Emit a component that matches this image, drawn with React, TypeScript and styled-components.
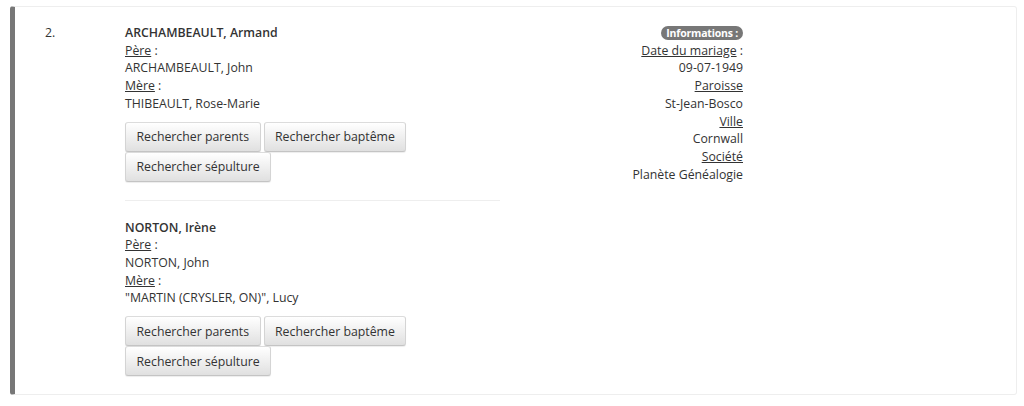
import React from "react";
import styled, { createGlobalStyle } from "styled-components";

const GlobalStyle = createGlobalStyle`
  html, body { margin: 0; padding: 0; background: #ffffff; }
  body {
    font-family: "Open Sans", "Liberation Sans", sans-serif;
    font-size: 12.3px;
    line-height: 17.7px;
    color: #333333;
  }
`;

const Card = styled.div`
  box-sizing: border-box;
  margin: 6px 0 0 10px;
  width: 1007px;
  height: 389px;
  border: 1px solid #eeeeee;
  border-left: 5px solid #777777;
  border-radius: 3px;
  padding: 17px 0 0 30px;
  display: grid;
  grid-template-columns: 80px 375px 243px;
  align-items: start;
`;

const Num = styled.div``;

const People = styled.div`
  display: flex;
  flex-direction: column;
`;

const Person = styled.div`
  display: flex;
  flex-direction: column;
`;

const Name = styled.div`
  font-weight: 600;
`;

const Label = styled.span`
  text-decoration: underline;
`;

const Buttons = styled.div`
  display: flex;
  flex-wrap: wrap;
  column-gap: 3px;
  row-gap: 0;
  margin-top: 9px;
  max-width: 300px;
`;

const Button = styled.button`
  box-sizing: border-box;
  height: 30px;
  padding: 0 10.5px;
  font-family: inherit;
  font-size: 12.3px;
  color: #333333;
  background-image: linear-gradient(to bottom, #ffffff 0%, #e0e0e0 100%);
  border: 1px solid #cccccc;
  border-color: #dcdcdc #d4d4d4 #c4c4c4;
  border-radius: 3px;
  box-shadow: inset 0 1px 0 rgba(255, 255, 255, 0.15), 0 1px 1px rgba(0, 0, 0, 0.075);
  cursor: pointer;
`;

const Separator = styled.hr`
  width: 100%;
  margin: 18px 0 18px;
  border: 0;
  border-top: 1px solid #eeeeee;
`;

const Info = styled.div`
  display: flex;
  flex-direction: column;
  align-items: flex-end;
  text-align: right;
`;

const Badge = styled.span`
  display: inline-block;
  margin-top: 2px;
  margin-bottom: 1.7px;
  padding: 0 5px;
  height: 14px;
  line-height: 14px;
  font-size: 10.5px;
  font-weight: 700;
  letter-spacing: -0.2px;
  color: #ffffff;
  background: #777777;
  border-radius: 8px;
`;

type PersonData = {
  name: string;
  father: string;
  mother: string;
};

const people: PersonData[] = [
  { name: "ARCHAMBEAULT, Armand", father: "ARCHAMBEAULT, John", mother: "THIBEAULT, Rose-Marie" },
  { name: "NORTON, Irène", father: "NORTON, John", mother: "\"MARTIN (CRYSLER, ON)\", Lucy" },
];

const PersonBlock = ({ p }: { p: PersonData }) => (
  <Person>
    <Name>{p.name}</Name>
    <div>
      <Label>Père</Label> :
    </div>
    <div>{p.father}</div>
    <div>
      <Label>Mère</Label> :
    </div>
    <div>{p.mother}</div>
    <Buttons>
      <Button>Rechercher parents</Button>
      <Button>Rechercher baptême</Button>
      <Button>Rechercher sépulture</Button>
    </Buttons>
  </Person>
);

export default function App() {
  return (
    <>
      <GlobalStyle />
      <Card>
        <Num>2.</Num>
        <People>
          <PersonBlock p={people[0]} />
          <Separator />
          <PersonBlock p={people[1]} />
        </People>
        <Info>
          <Badge>Informations :</Badge>
          <div>
            <Label>Date du mariage</Label> :
          </div>
          <div>09-07-1949</div>
          <div>
            <Label>Paroisse</Label>
          </div>
          <div>St-Jean-Bosco</div>
          <div>
            <Label>Ville</Label>
          </div>
          <div>Cornwall</div>
          <div>
            <Label>Société</Label>
          </div>
          <div>Planète Généalogie</div>
        </Info>
      </Card>
    </>
  );
}
